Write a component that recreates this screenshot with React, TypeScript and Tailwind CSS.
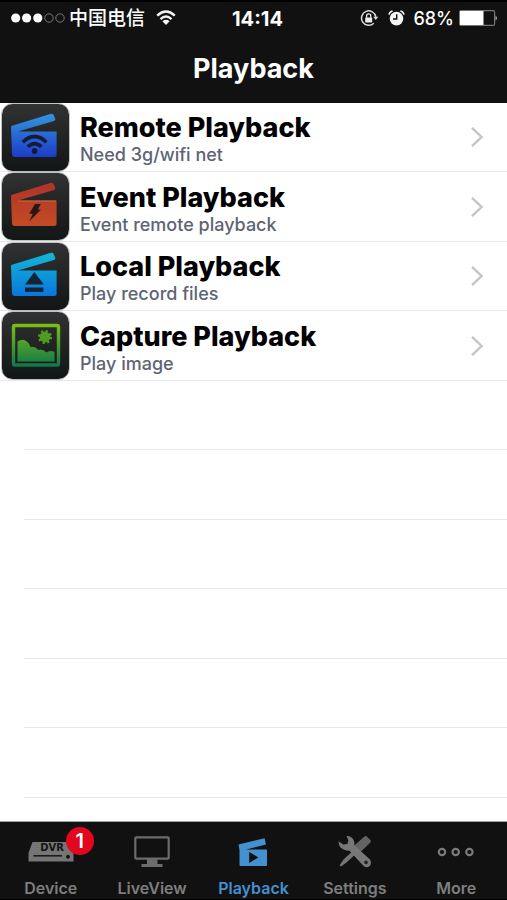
import { useState } from 'react';
import type { ReactNode } from 'react';

type TileKind = 'remote' | 'event' | 'local' | 'capture';

interface PlaybackItem {
  id: TileKind;
  title: string;
  description: string;
}

const items: PlaybackItem[] = [
  { id: 'remote', title: 'Remote Playback', description: 'Need 3g/wifi net' },
  { id: 'event', title: 'Event Playback', description: 'Event remote playback' },
  { id: 'local', title: 'Local Playback', description: 'Play record files' },
  { id: 'capture', title: 'Capture Playback', description: 'Play image' },
];

const emptyRows = [1, 2, 3, 4, 5, 6];

const tileColors: Record<TileKind, [string, string]> = {
  remote: ['#3390dc', '#1c3ac8'],
  event: ['#b0342a', '#c44c24'],
  local: ['#12b4d8', '#0a74dc'],
  capture: ['#7cc010', '#10784a'],
};

function Tile({ kind }: { kind: TileKind }) {
  const fill = `url(#fill-${kind})`;
  const [from, to] = tileColors[kind];

  return (
    <svg className="mt-px h-[67px] w-[67px] shrink-0 self-start overflow-visible" viewBox="0 0 67 67" aria-hidden="true">
      <defs>
        <linearGradient id={`fill-${kind}`} gradientUnits="userSpaceOnUse" x1="0" y1="12" x2="0" y2="54">
          <stop offset="0" stopColor={from} />
          <stop offset="1" stopColor={to} />
        </linearGradient>
        <linearGradient id={`tile-${kind}`} x1="0" y1="0" x2="0" y2="1">
          <stop offset="0" stopColor="#303233" />
          <stop offset="0.45" stopColor="#232525" />
          <stop offset="1" stopColor="#131616" />
        </linearGradient>
      </defs>
      <rect x="-0.5" y="-0.5" width="68" height="68" rx="11" fill="none" stroke="#9a9a9a" strokeOpacity="0.6" />
      <rect width="67" height="67" rx="10.5" fill={`url(#tile-${kind})`} />

      {kind !== 'capture' && (
        <g fill={fill}>
          <path d="M9 24Q8.5 22.4 10 21.8L49 9.8Q50.8 9.3 51.6 11L53.2 14.5Q53.8 16.3 52 16.9L16 27.6H54.6V50.5Q54.6 53 52 53H13Q10 53 10 50Z" />
        </g>
      )}
      {kind === 'remote' && (
        <g fill="none" stroke="#141b3a" strokeWidth="3.6">
          <path d="M20.8 38.2Q32.5 26.8 44.4 38.2" />
          <path d="M25.8 42.8Q32.5 36.4 39.4 42.8" />
          <circle cx="32.6" cy="47" r="2.9" fill="#141b3a" stroke="none" />
        </g>
      )}
      {kind === 'event' && (
        <>
          <path d="M16 28H54" stroke="#d4744a" strokeWidth="0.8" />
          <path d="M33 31H38.8L35.8 36.4H39L27.2 48.6L30.8 40.8H27.2Z" fill="#2c1614" />
        </>
      )}
      {kind === 'local' && (
        <g fill="#142432">
          <path d="M32.4 29L41.8 41.5H23Z" />
          <rect x="23" y="44.5" width="18.4" height="4.4" />
        </g>
      )}
      {kind === 'capture' && (
        <>
          <rect x="11.5" y="13.5" width="45" height="39.5" rx="1.5" fill="none" stroke={fill} strokeWidth="3.4" />
          <path
            d="M15.5 49.5V29.5Q20 26.5 24 29Q27 30.5 28.5 35Q33 34 36.5 38Q40 36 44.5 40.5Q49 38 52.5 40V49.5Z"
            fill={fill}
          />
          <circle cx="43" cy="25" r="5.4" fill="#4f9d20" />
          <circle cx="43" cy="25" r="6" fill="none" stroke="#4f9d20" strokeWidth="2.2" strokeDasharray="2.2 2.51" />
        </>
      )}
    </svg>
  );
}

function StatusBar() {
  return (
    <div className="grid h-9 grid-cols-[1fr_auto_1fr] items-center border-t-2 border-black pr-[3px] pl-[11px] text-[18px] leading-6 text-white">
      <div className="flex items-center">
        <svg width="54" height="12" viewBox="0 0 54 12" aria-hidden="true">
          <circle cx="4.7" cy="5" r="4.6" fill="#fff" />
          <circle cx="15.6" cy="5" r="4.6" fill="#fff" />
          <circle cx="26.8" cy="5" r="4.6" fill="#fff" />
          <circle cx="38" cy="5" r="4.2" fill="none" stroke="#777" />
          <circle cx="49" cy="5" r="4.2" fill="none" stroke="#777" />
        </svg>
        <span className="ml-1 text-[19px] font-medium">中国电信</span>
        <svg className="ml-[11px]" width="20" height="18" viewBox="0 0 20 18" aria-hidden="true">
          <g fill="none" stroke="#f4f4f4" strokeWidth="2.4">
            <path d="M1.2 5.6Q10 -2.4 18.8 5.6" />
            <path d="M4.5 9.1Q10 4.1 15.5 9.1" />
          </g>
          <path d="M6.4 11.2Q10 8.4 13.6 11.2L10 15Z" fill="#f4f4f4" />
        </svg>
      </div>
      <span className="text-[20px] font-bold">14:14</span>
      <div className="flex items-center justify-end pr-[6px]">
        <svg width="19" height="18" viewBox="0 0 19 18" aria-hidden="true">
          <path d="M15.8 6.8A7.2 7.2 0 1 0 13.8 13.2" fill="none" stroke="#ddd" strokeWidth="1.5" />
          <path d="M13.2 6.8H18.4L15.8 10Z" fill="#ddd" />
          <rect x="5.2" y="7.4" width="7" height="5" rx="0.6" fill="#eee" />
          <path d="M6.6 7.8V6A2.1 2.1 0 0 1 10.8 6V7.8" fill="none" stroke="#eee" strokeWidth="1.3" />
        </svg>
        <svg className="ml-[9px]" width="17" height="18" viewBox="0 0 17 18" aria-hidden="true">
          <circle cx="8.5" cy="8.6" r="6.8" fill="#f4f4f4" />
          <path d="M8.7 4.2V9H5" fill="none" stroke="#111" strokeWidth="1.4" />
          <path d="M1 4.6Q1.6 1.8 4.6 1M16 4.6Q15.4 1.8 12.4 1" fill="none" stroke="#f4f4f4" strokeWidth="1.6" />
        </svg>
        <span className="ml-2 font-medium">68%</span>
        <svg className="ml-[5px]" width="39" height="18" viewBox="0 0 39 18" aria-hidden="true">
          <rect x="0.6" y="0.6" width="35" height="14.8" rx="1.5" fill="none" stroke="#777" strokeWidth="1.2" />
          <rect x="1" y="1" width="23.5" height="14" fill="#fff" />
          <path d="M36.6 5.4Q39 8 36.6 10.6Z" fill="#ccc" />
        </svg>
      </div>
    </div>
  );
}

function DeviceIcon() {
  return (
    <svg width="46" height="22" viewBox="0 0 46 22" aria-hidden="true">
      <path d="M4.5 1H41.5L45.5 12V20.5H0.5V12Z" fill="#757575" />
      <text
        x="24"
        y="9.5"
        textAnchor="middle"
        fontFamily="DejaVu Sans, sans-serif"
        fontWeight="700"
        fontSize="10"
        fill="#141414"
      >
        DVR
      </text>
      <path d="M5.5 14.8H34" stroke="#141414" strokeWidth="1.5" />
      <circle cx="40" cy="15.8" r="2" fill="#141414" />
    </svg>
  );
}

function LiveViewIcon() {
  return (
    <svg width="36" height="32" viewBox="0 0 36 32" aria-hidden="true">
      <rect x="1.3" y="1.3" width="33.4" height="21.4" rx="1" fill="none" stroke="#6c6c6c" strokeWidth="2.2" />
      <path d="M13 23H23.5V28H28.5V31H7.5V28H13Z" fill="#6c6c6c" />
    </svg>
  );
}

function PlaybackIcon() {
  return (
    <svg width="30" height="28" viewBox="0 0 30 28" aria-hidden="true">
      <path d="M0.5 6.5L26.6 0.3L28 6.4L8 11.4H29V27Q29 28 28 28H2.5Q1.5 28 1.5 27V12Z" fill="#4590cf" />
      <path d="M11.2 14V25L20.4 19.4Z" fill="#111" />
    </svg>
  );
}

function SettingsIcon() {
  return (
    <svg width="34" height="34" viewBox="0 0 34 34" aria-hidden="true">
      <path d="M26.5 1.5Q27.8 0.6 29 1.8L32.4 5Q33.4 6.2 32.4 7.4L22 17.4L15.6 11Z" fill="#636363" />
      <path d="M18.5 12.5L21.5 15.5L8.5 27.5L3 31.5L1.6 30.2L5.5 24.5Z" fill="#747474" />
      <path
        d="M8.4 1Q14.8 1 16.2 6.6L16.4 10.2L32 24.4Q34 28 31.8 31Q28.8 33.4 25.6 31L11.2 15.6Q7.4 16.2 3.8 13.6Q0.4 10.8 0.6 6.2L5.2 9.4L9.4 9L10.4 5.2Z"
        fill="#777"
      />
      <circle cx="28" cy="27.4" r="1.8" fill="#222" />
    </svg>
  );
}

function MoreIcon() {
  return (
    <svg width="38" height="10" viewBox="0 0 38 10" aria-hidden="true">
      <g fill="none" stroke="#7a7a7a" strokeWidth="2.2">
        <circle cx="5" cy="5" r="3.2" />
        <circle cx="18.7" cy="5" r="3.2" />
        <circle cx="32.4" cy="5" r="3.2" />
      </g>
    </svg>
  );
}

const tabs: { name: string; icon: ReactNode; badge?: number }[] = [
  { name: 'Device', icon: <DeviceIcon />, badge: 1 },
  { name: 'LiveView', icon: <LiveViewIcon /> },
  { name: 'Playback', icon: <PlaybackIcon /> },
  { name: 'Settings', icon: <SettingsIcon /> },
  { name: 'More', icon: <MoreIcon /> },
];

export default function App() {
  const [activeTab, setActiveTab] = useState('Playback');

  return (
    <div className="flex min-h-screen flex-col bg-white font-[Inter,'Noto_Sans_CJK_SC',sans-serif]">
      <header className="bg-[#111]">
        <StatusBar />
        <h1 className="pt-[17px] pb-[18px] text-center text-[27px] leading-8 font-bold text-white">Playback</h1>
      </header>

      <main className="flex-1">
        <ul>
          {items.map((item) => (
            <li key={item.id} className="h-[69px] border-b border-[#e8e8ea] even:h-[70px]">
              <button className="flex h-full w-full items-center pr-[22px] pl-[2px] text-left">
                <Tile kind={item.id} />
                <span className="ml-[11px] flex-1 pt-1">
                  <span className="block text-[27px] leading-8 font-extrabold text-black">{item.title}</span>
                  <span className="block text-[18px] leading-[22px] font-medium text-[#5d6473]">{item.description}</span>
                </span>
                <svg width="15" height="22" viewBox="0 0 15 22" aria-hidden="true">
                  <path d="M2 1.8L11.6 11L2 20.2" fill="none" stroke="#c5c5c9" strokeWidth="2.4" />
                </svg>
              </button>
            </li>
          ))}
          {emptyRows.map((row) => (
            <li key={row} className="ml-6 h-[69px] border-b border-[#e8e8ea] even:h-[70px]" />
          ))}
        </ul>
      </main>

      <nav className="grid grid-cols-5 border-t border-b border-t-[#a0a0a0] border-b-black bg-[#111]">
        {tabs.map((tab) => (
          <button
            key={tab.name}
            onClick={() => setActiveTab(tab.name)}
            className={`flex flex-col items-center pb-px text-[16px] leading-5 font-semibold ${
              activeTab === tab.name ? 'text-[#4590cf]' : 'text-[#7e7e7e]'
            }`}
          >
            <span className="relative flex h-14 items-center justify-center pt-1">
              {tab.icon}
              {tab.badge && (
                <span className="absolute top-[5px] left-[38px] flex h-7 w-7 items-center justify-center rounded-full bg-[#e2061f] text-[20px] font-semibold text-white">
                  {tab.badge}
                </span>
              )}
            </span>
            <span>{tab.name}</span>
          </button>
        ))}
      </nav>
    </div>
  );
}
